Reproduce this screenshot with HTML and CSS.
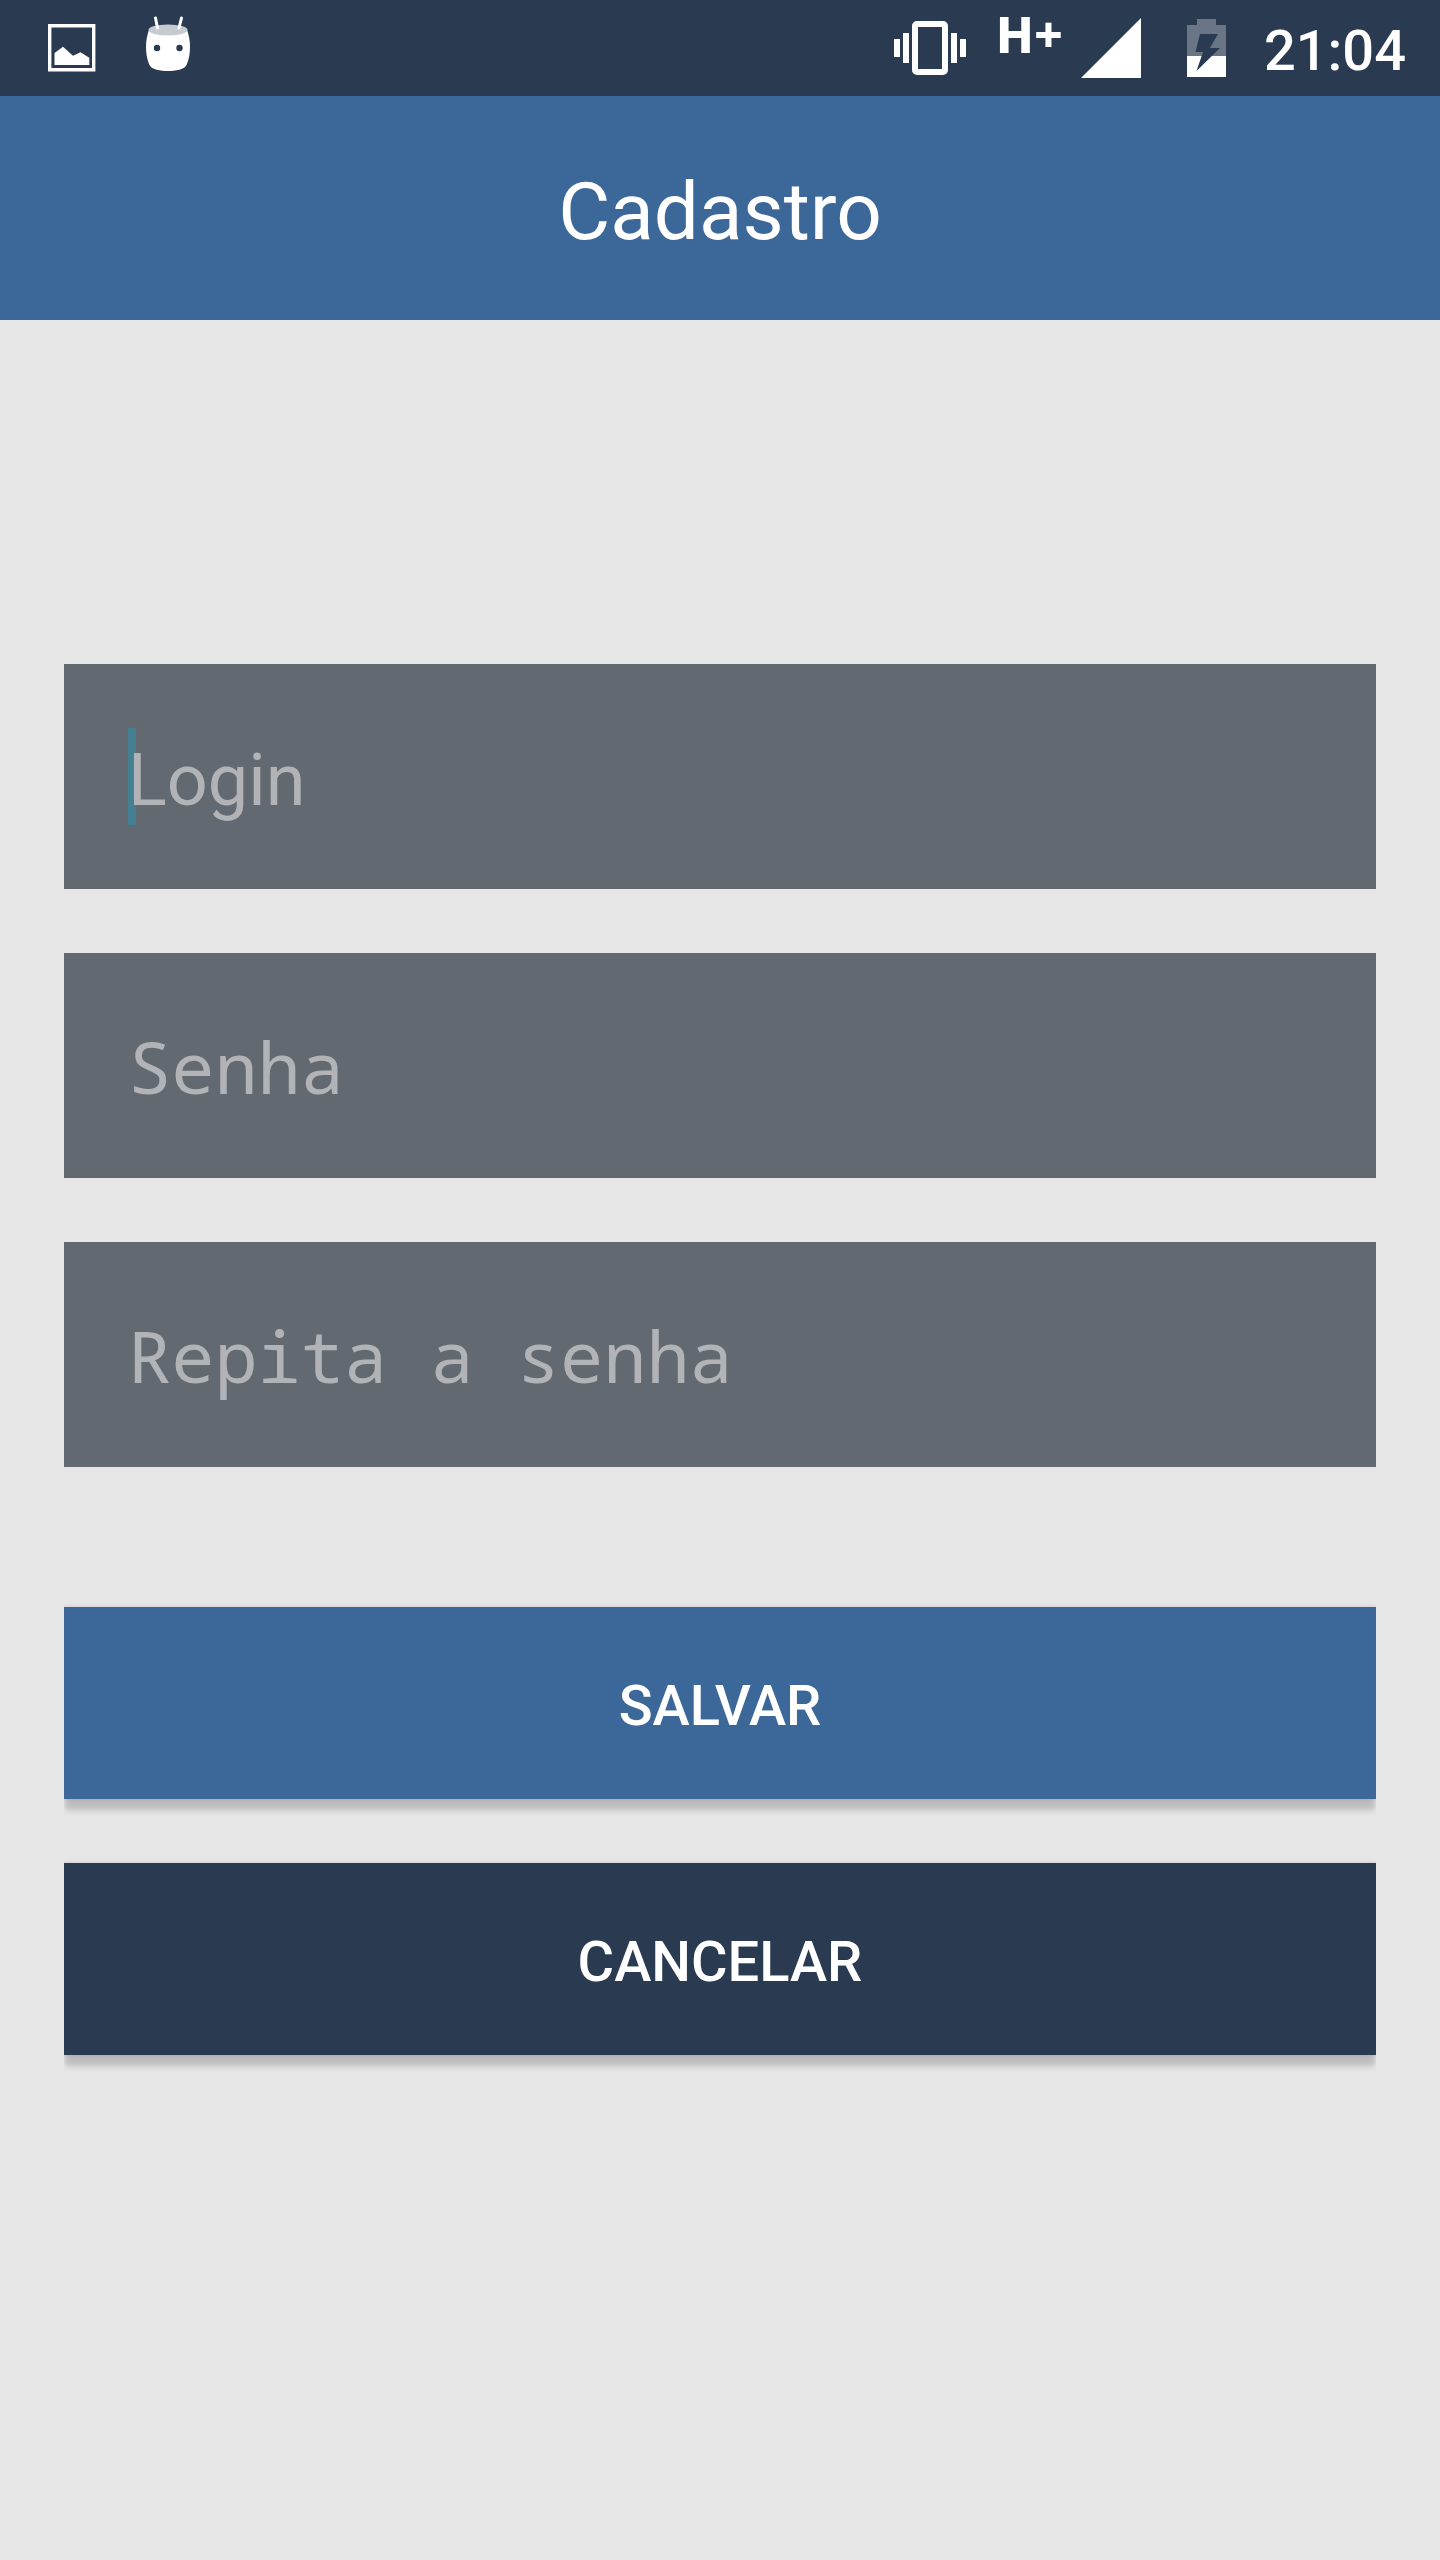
FILE: index.html
```html
<!DOCTYPE html>
<html lang="pt-BR">
<head>
<meta charset="utf-8">
<meta name="viewport" content="width=device-width, initial-scale=1">
<title>Cadastro</title>
<link rel="stylesheet" href="styles.css">
</head>
<body>
<div class="status-bar">
  <div class="notifications">
    <svg class="icon" width="48" height="48" viewBox="0 0 48 48" aria-hidden="true">
      <path fill="none" stroke="#fff" stroke-width="3.4" d="M1.700 1.700h44v44h-44z"/>
      <path fill="#fff" d="M6.500 29 15 22.700l10 9 7.500-3.400 8.800 5.500V41H6.500z"/>
    </svg>
    <svg class="icon" width="47" height="56" viewBox="0 0 47 56" aria-hidden="true">
      <path fill="#fff" d="M4 14C0 24 0 38 4 48c2 6 12 7 19 7s17-1 19-7c4-10 4-24 0-34z"/>
      <ellipse cx="23" cy="14" rx="19.500" ry="5.500" fill="#c6cbd1"/>
      <path stroke="#fff" stroke-width="3" stroke-linecap="round" d="m10.500 2 2 10M36.500 2l-2.500 10"/>
      <circle cx="12" cy="32" r="3.200" fill="#2a3b51"/>
      <circle cx="34.500" cy="32" r="3.200" fill="#2a3b51"/>
    </svg>
  </div>
  <div class="system">
    <svg class="icon" width="72" height="54" viewBox="0 0 72 54" aria-hidden="true">
      <path fill="#fff" d="M0 18h6v18H0zM9 12h6v30H9zM57 12h6v30h-6zM66 18h6v18h-6z"/>
      <rect x="21" y="3" width="30" height="48" rx="2" fill="none" stroke="#fff" stroke-width="6"/>
    </svg>
    <span class="network">H+</span>
    <svg class="icon" width="60" height="60" viewBox="0 0 60 60" aria-hidden="true">
      <path fill="#fff" d="M60 0v60H0z"/>
    </svg>
    <svg class="icon battery" width="39" height="58" viewBox="0 0 39 58" aria-hidden="true">
      <path fill="#6a7685" d="M10 0h19v6h10v31H0V6h10z"/>
      <path fill="#fff" d="M0 37h39v21H0z"/>
      <path fill="#2a3b51" d="M13 15h18l-8 14h10L9.500 52l6.500-19H8.500z"/>
    </svg>
    <time class="clock">21:04</time>
  </div>
</div>
<header class="app-bar"><h1 class="title">Cadastro</h1></header>
<main class="content">
  <form class="form">
    <div class="fields">
      <input class="field field-active" type="text" placeholder="Login" aria-label="Login">
      <input class="field field-password" type="password" placeholder="Senha" aria-label="Senha">
      <input class="field field-password" type="password" placeholder="Repita a senha" aria-label="Repita a senha">
    </div>
    <div class="actions">
      <button class="button button-save" type="submit">SALVAR</button>
      <button class="button button-cancel" type="button">CANCELAR</button>
    </div>
  </form>
</main>
</body>
</html>
```
FILE: styles.css
```css
* {
  box-sizing: border-box;
}

body {
  margin: 0;
  min-height: 100vh;
  background: #e6e6e6;
  font-family: Roboto, "Liberation Sans", sans-serif;
}

.status-bar {
  display: flex;
  justify-content: space-between;
  height: 96px;
  padding: 0 34px 0 48px;
  background: #2a3b51;
  color: #fff;
}

.notifications,
.system {
  display: flex;
  align-items: center;
}

.notifications {
  gap: 49px;
}

.notifications .icon:last-child {
  margin-bottom: 8px;
}

.icon {
  flex: none;
  display: block;
}

.network {
  align-self: flex-start;
  margin: 0 18px 0 30px;
  font: 800 50px/68px "Noto Sans", "Open Sans", sans-serif;
}

.battery {
  margin: 0 38px 0 46px;
}

.clock {
  padding-top: 6px;
  font-size: 56px;
  font-weight: 500;
  line-height: 64px;
}

.app-bar {
  display: flex;
  align-items: center;
  justify-content: center;
  height: 224px;
  padding-top: 8px;
  background: #3c6899;
  color: #fff;
}

.title {
  margin: 0;
  font-size: 80px;
  font-weight: 400;
  line-height: 96px;
}

.content {
  padding: 344px 64px 64px;
}

.form {
  display: flex;
  flex-direction: column;
  gap: 140px;
}

.fields,
.actions {
  display: flex;
  flex-direction: column;
  gap: 64px;
}

.field {
  width: 100%;
  height: 225px;
  padding: 8px 64px 0;
  border: 0;
  border-radius: 0;
  outline: 0;
  background: #636970;
  color: #fff;
  font: 400 72px Roboto, "Liberation Sans", sans-serif;
}

.field::placeholder {
  color: #b1b3b6;
  opacity: 1;
}

/* text caret of the active field */
.field-active {
  background: linear-gradient(#447f92, #447f92) 64px center / 8px 97px no-repeat #636970;
}

.field-password {
  padding-top: 0;
  font-family: "Droid Sans Mono", "Noto Sans Mono", "DejaVu Sans Mono", monospace;
}

.button {
  width: 100%;
  height: 192px;
  padding: 6px 32px 0;
  border: 0;
  color: #fff;
  font: 500 56px Roboto, "Liberation Sans", sans-serif;
  box-shadow: 0 12px 6px -1px rgba(0, 0, 0, 0.18), 0 0 4px rgba(0, 0, 0, 0.12);
  clip-path: inset(-8px 0 -24px);
}

.button-save {
  background: #3c6899;
}

.button-cancel {
  background: #2a3b51;
}
```
